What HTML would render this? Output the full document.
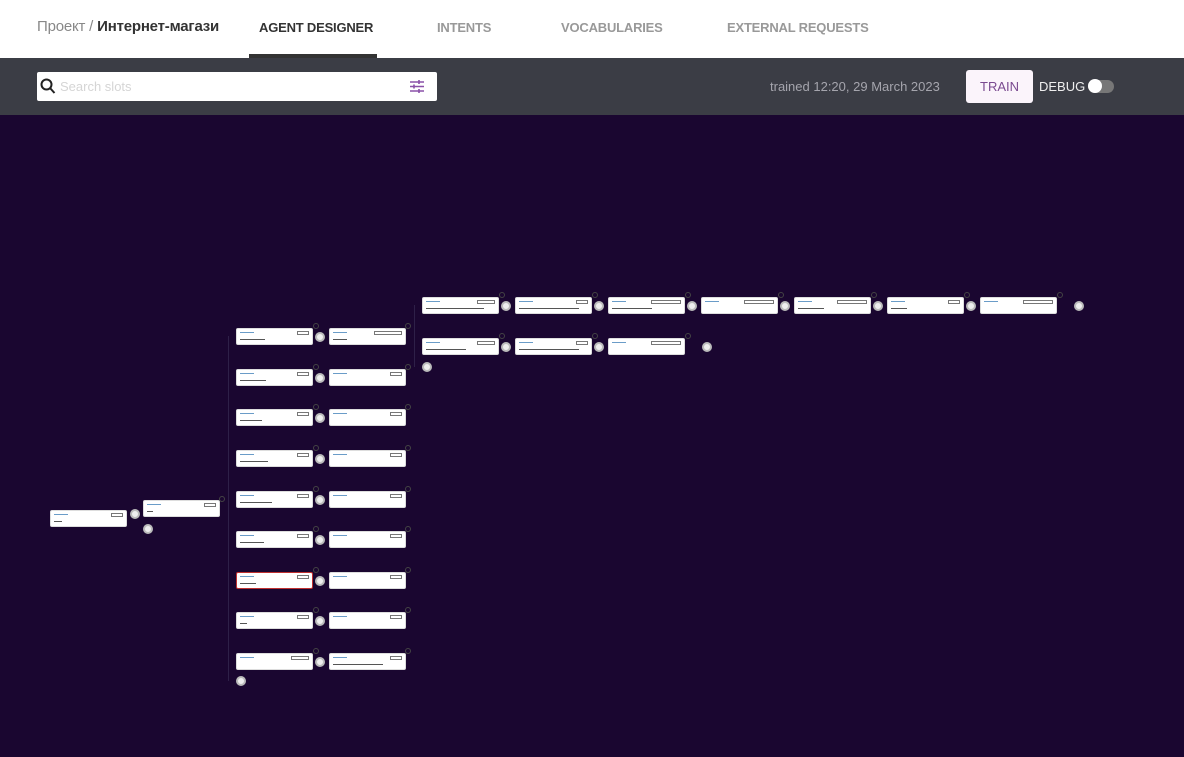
<!DOCTYPE html>
<html><head><meta charset="utf-8"><style>
*{margin:0;padding:0;box-sizing:border-box}
body{width:1184px;height:757px;overflow:hidden;background:#1a0630;font-family:"Liberation Sans",sans-serif;position:relative}
.top{position:absolute;left:0;top:0;width:1184px;height:58px;background:#fff}
.top span{position:absolute;top:19px;font-size:14px;font-weight:bold;color:#999;letter-spacing:-.2px}
.bar{position:absolute;left:0;top:58px;width:1184px;height:57px;background:#3b3d45}
.search{position:absolute;left:37px;top:72px;width:400px;height:29px;background:#fff;border-radius:2px}
.n{position:absolute;width:77px;height:17px;background:#fff;border-radius:2px;border:1px solid #ddd}
.n i{position:absolute;left:3px;top:3px;width:14px;height:1px;background:#6a9cc8}
.n b{position:absolute;right:3px;top:2px;width:12px;height:4px;border:1px solid #777}
.n s{position:absolute;left:3px;top:10px;height:1px;background:#555;text-decoration:none}
.c{position:absolute;width:10px;height:10px;border-radius:50%;background:#eee;border:2px solid #bbb}
.d{position:absolute;width:6px;height:6px;border-radius:50%;border:1px solid #444}
.ln{position:absolute;background:#2e2048}
</style></head><body>
<div class="top">
<span style="left:37px;color:#888;font-weight:normal;font-size:15px;top:18px">Проект / <b style="color:#333">Интернет-магази</b></span>
<span style="left:259px;color:#333;font-size:13px;top:20px">AGENT DESIGNER</span>
<span style="left:437px;font-size:13px;top:20px">INTENTS</span>
<span style="left:561px;font-size:13px;top:20px">VOCABULARIES</span>
<span style="left:727px;font-size:13px;top:20px">EXTERNAL REQUESTS</span>
<div style="position:absolute;left:249px;top:54px;width:128px;height:4px;background:#333"></div>
</div>
<div class="bar">
<div class="search" style="top:14px">
<svg style="position:absolute;left:3px;top:6px" width="16" height="17" viewBox="0 0 16 17"><circle cx="6.5" cy="6.5" r="5" fill="none" stroke="#222" stroke-width="2"/><path d="M10 10l4.5 5" stroke="#222" stroke-width="2"/></svg>
<span style="position:absolute;left:23px;top:7px;font-size:13px;color:#d5d5d5">Search slots</span>
<svg style="position:absolute;left:373px;top:7px" width="14" height="15" viewBox="0 0 14 15"><path d="M0 3h14M0 7.5h14M0 12h14M9 1v4M4 5.5v4M9 10v4" stroke="#8a50a8" stroke-width="1.6"/></svg>
</div>
<span style="position:absolute;left:770px;top:21px;font-size:13px;color:#a5a5ad">trained 12:20, 29 March 2023</span>
<div style="position:absolute;left:966px;top:12px;width:67px;height:33px;background:#fbf4fb;border-radius:3px;color:#7a4a90;font-size:13px;text-align:center;line-height:33px">TRAIN</div>
<span style="position:absolute;left:1039px;top:21px;font-size:13px;color:#eee">DEBUG</span>
<div style="position:absolute;left:1088px;top:22px;width:26px;height:13px;border-radius:7px;background:#777"></div>
<div style="position:absolute;left:1088px;top:21px;width:14px;height:14px;border-radius:50%;background:#fff"></div>
</div>
<div class="ln" style="left:228px;top:336px;width:1px;height:345px"></div>
<div class="ln" style="left:414px;top:305px;width:1px;height:62px"></div>
<div class="n" style="left:50px;top:510px"><i></i><b></b><s style="width:8px"></s></div>
<div class="c" style="left:130px;top:509px"></div><div class="c" style="left:143px;top:524px"></div>
<div class="n" style="left:143px;top:500px"><i></i><b></b><s style="width:6px"></s></div>
<div class="d" style="left:219px;top:496px"></div>
<div class="n" style="left:236px;top:328px"><i></i><b></b><s style="width:25px"></s></div><div class="c" style="left:315px;top:332px"></div><div class="d" style="left:313px;top:323px"></div><div class="n" style="left:329px;top:328px"><i></i><b style="width:28px"></b><s style="width:14px"></s></div><div class="d" style="left:405px;top:323px"></div>
<div class="n" style="left:236px;top:369px"><i></i><b></b><s style="width:26px"></s></div><div class="c" style="left:315px;top:373px"></div><div class="d" style="left:313px;top:364px"></div><div class="n" style="left:329px;top:369px"><i></i><b></b></div><div class="d" style="left:405px;top:364px"></div>
<div class="n" style="left:236px;top:409px"><i></i><b></b><s style="width:22px"></s></div><div class="c" style="left:315px;top:413px"></div><div class="d" style="left:313px;top:404px"></div><div class="n" style="left:329px;top:409px"><i></i><b></b></div><div class="d" style="left:405px;top:404px"></div>
<div class="n" style="left:236px;top:450px"><i></i><b></b><s style="width:28px"></s></div><div class="c" style="left:315px;top:454px"></div><div class="d" style="left:313px;top:445px"></div><div class="n" style="left:329px;top:450px"><i></i><b></b></div><div class="d" style="left:405px;top:445px"></div>
<div class="n" style="left:236px;top:491px"><i></i><b></b><s style="width:32px"></s></div><div class="c" style="left:315px;top:495px"></div><div class="d" style="left:313px;top:486px"></div><div class="n" style="left:329px;top:491px"><i></i><b></b></div><div class="d" style="left:405px;top:486px"></div>
<div class="n" style="left:236px;top:531px"><i></i><b></b><s style="width:24px"></s></div><div class="c" style="left:315px;top:535px"></div><div class="d" style="left:313px;top:526px"></div><div class="n" style="left:329px;top:531px"><i></i><b></b></div><div class="d" style="left:405px;top:526px"></div>
<div class="n" style="left:236px;top:572px;border-color:#c03030"><i></i><b></b><s style="width:16px"></s></div><div class="c" style="left:315px;top:576px"></div><div class="d" style="left:313px;top:567px"></div><div class="n" style="left:329px;top:572px"><i></i><b></b></div><div class="d" style="left:405px;top:567px"></div>
<div class="n" style="left:236px;top:612px"><i></i><b></b><s style="width:7px"></s></div><div class="c" style="left:315px;top:616px"></div><div class="d" style="left:313px;top:607px"></div><div class="n" style="left:329px;top:612px"><i></i><b></b></div><div class="d" style="left:405px;top:607px"></div>
<div class="n" style="left:236px;top:653px"><i></i><b style="width:18px"></b></div><div class="c" style="left:315px;top:657px"></div><div class="d" style="left:313px;top:648px"></div><div class="n" style="left:329px;top:653px"><i></i><b></b><s style="width:50px"></s></div><div class="d" style="left:405px;top:648px"></div>
<div class="c" style="left:236px;top:676px"></div>
<div class="n" style="left:422px;top:297px"><i></i><b style="width:18px"></b><s style="width:58px"></s></div><div class="c" style="left:501px;top:301px"></div><div class="d" style="left:499px;top:292px"></div>
<div class="n" style="left:515px;top:297px"><i></i><b></b><s style="width:60px"></s></div><div class="c" style="left:594px;top:301px"></div><div class="d" style="left:592px;top:292px"></div>
<div class="n" style="left:608px;top:297px"><i></i><b style="width:30px"></b><s style="width:40px"></s></div><div class="c" style="left:687px;top:301px"></div><div class="d" style="left:685px;top:292px"></div>
<div class="n" style="left:701px;top:297px"><i></i><b style="width:30px"></b></div><div class="c" style="left:780px;top:301px"></div><div class="d" style="left:778px;top:292px"></div>
<div class="n" style="left:794px;top:297px"><i></i><b style="width:30px"></b><s style="width:26px"></s></div><div class="c" style="left:873px;top:301px"></div><div class="d" style="left:871px;top:292px"></div>
<div class="n" style="left:887px;top:297px"><i></i><b></b><s style="width:16px"></s></div><div class="c" style="left:966px;top:301px"></div><div class="d" style="left:964px;top:292px"></div>
<div class="n" style="left:980px;top:297px"><i></i><b style="width:30px"></b></div><div class="d" style="left:1057px;top:292px"></div>
<div class="c" style="left:1074px;top:301px"></div>
<div class="n" style="left:422px;top:338px"><i></i><b style="width:18px"></b><s style="width:40px"></s></div><div class="c" style="left:501px;top:342px"></div><div class="d" style="left:499px;top:333px"></div>
<div class="n" style="left:515px;top:338px"><i></i><b></b><s style="width:60px"></s></div><div class="c" style="left:594px;top:342px"></div><div class="d" style="left:592px;top:333px"></div>
<div class="n" style="left:608px;top:338px"><i></i><b style="width:30px"></b></div><div class="d" style="left:685px;top:333px"></div>
<div class="c" style="left:702px;top:342px"></div>
<div class="c" style="left:422px;top:362px"></div>
</body></html>
